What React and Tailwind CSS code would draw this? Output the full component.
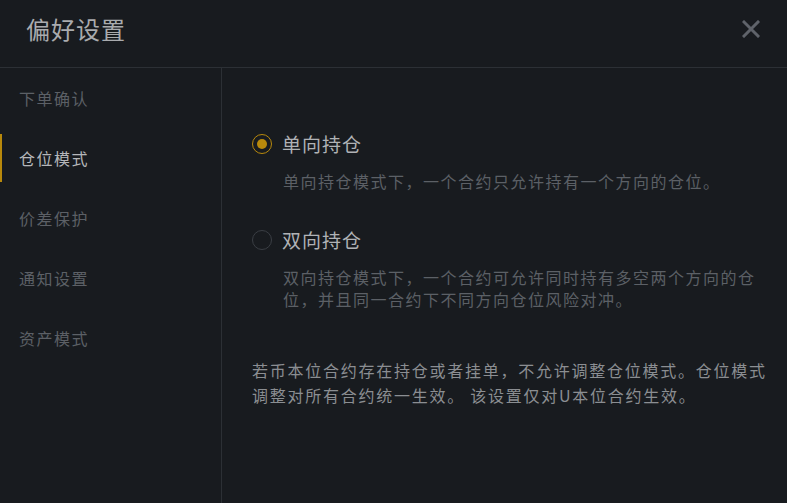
import { useState } from 'react';

const MENU = ['下单确认', '仓位模式', '价差保护', '通知设置', '资产模式'];

const OPTIONS = [
  {
    key: 'one',
    label: '单向持仓',
    desc: '单向持仓模式下，一个合约只允许持有一个方向的仓位。',
  },
  {
    key: 'hedge',
    label: '双向持仓',
    desc: '双向持仓模式下，一个合约可允许同时持有多空两个方向的仓位，并且同一合约下不同方向仓位风险对冲。',
  },
];

const Radio = ({ checked }) => (
  <span
    className={`flex h-[20px] w-[20px] shrink-0 items-center justify-center rounded-full border-[1.5px] ${
      checked ? 'border-[#b8890c]' : 'border-[#3a3e44]'
    }`}
  >
    {checked && <span className="h-[10px] w-[10px] rounded-full bg-[#b8890c]" />}
  </span>
);

export default function App() {
  const [active, setActive] = useState(1);
  const [mode, setMode] = useState('one');

  return (
    <div
      className="flex h-[503px] w-[787px] flex-col overflow-hidden bg-[#181b1f]"
      style={{ fontFamily: '"Noto Sans CJK SC", "Noto Sans", sans-serif' }}
    >
      {/* Header */}
      <div className="flex h-[68px] shrink-0 items-center justify-between border-b border-[#2c3035] pl-[26px] pr-[27px]">
        <h1 className="pb-[10px] text-[24px] leading-none tracking-[1px] text-[#a9abae]">偏好设置</h1>
        <button className="pb-[10px] text-[#5f636a]">
          <svg width="18" height="18" viewBox="0 0 18 18">
            <path d="M2 2L16 16M16 2L2 16" stroke="currentColor" strokeWidth="3" strokeLinecap="square" />
          </svg>
        </button>
      </div>

      <div className="flex min-h-0 flex-1">
        {/* Sidebar */}
        <div className="flex w-[222px] shrink-0 flex-col gap-[12px] border-r border-[#2c3035] pt-[6px]">
          {MENU.map((item, i) => (
            <div
              key={item}
              onClick={() => setActive(i)}
              className={`flex h-[48px] cursor-pointer items-center border-l-2 pl-[17px] text-[16px] tracking-[1.5px] ${
                i === active ? 'border-[#b8890c] text-[#b5b7ba]' : 'border-transparent text-[#5c6066]'
              }`}
            >
              {item}
            </div>
          ))}
        </div>

        {/* Content */}
        <div className="flex-1 pl-[30px] pr-[15px] pt-[62px]">
          {OPTIONS.map((opt, i) => (
            <div key={opt.key} className={i > 0 ? 'mt-[34px]' : ''}>
              <div className="flex h-[28px] cursor-pointer items-center gap-[10px]" onClick={() => setMode(opt.key)}>
                <Radio checked={mode === opt.key} />
                <span className="text-[19px] tracking-[1px] text-[#b0b2b5]">{opt.label}</span>
              </div>
              <p className="mt-[12px] pl-[31px] text-[16px] leading-[22px] tracking-[1.5px] text-[#5c6066]">
                {opt.desc}
              </p>
            </div>
          ))}

          <p className="mt-[48px] text-[16px] leading-[25px] tracking-[1.75px] text-[#8b8e92]">
            若币本位合约存在持仓或者挂单，不允许调整仓位模式。仓位模式调整对所有合约统一生效。 该设置仅对U本位合约生效。
          </p>
        </div>
      </div>
    </div>
  );
}
